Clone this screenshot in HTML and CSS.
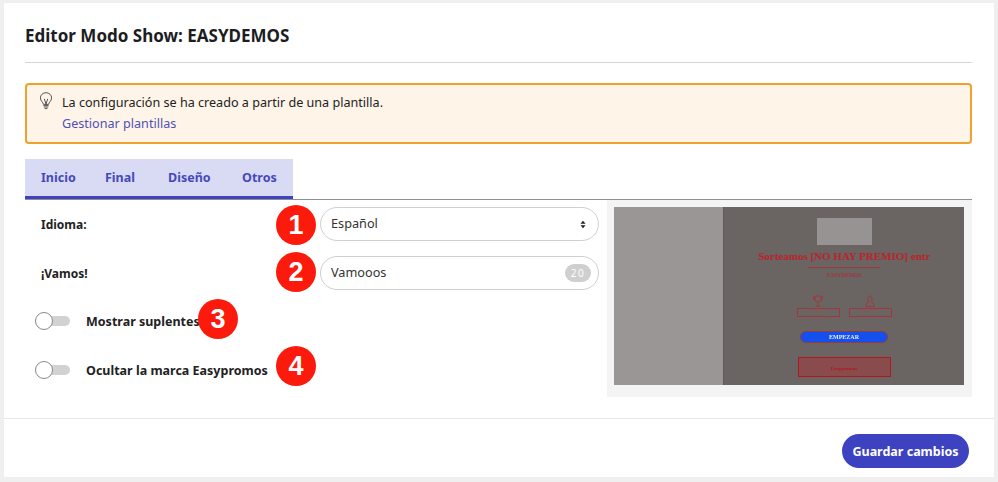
FILE: index.html
```html
<!DOCTYPE html>
<html lang="es">
<head>
<meta charset="utf-8">
<title>Editor Modo Show</title>
<link rel="stylesheet" href="styles.css">
</head>
<body>
<div class="frame">
  <div class="main">
    <h1 class="title">Editor Modo Show: EASYDEMOS</h1>
    <div class="alert">
      <svg class="bulb" width="14" height="18" viewBox="0 0 14 18" fill="none" stroke="#444" stroke-width="0.9" stroke-linecap="round" stroke-linejoin="round">
        <path d="M4.400 12C4.200 10.200 1.400 9 1.400 5.900A5.600 5.200 0 0 1 12.600 5.900C12.600 9 9.800 10.200 9.600 12Z"/>
        <path d="M5.400 7.200 7 12M8.600 7.200 7 12"/>
        <path d="M4.800 13.600H9.200M5.200 15H8.800M6 16.600H8"/>
      </svg>
      <div class="alert-text">
        <p class="alert-line">La configuración se ha creado a partir de una plantilla.</p>
        <a class="alert-link" href="#">Gestionar plantillas</a>
      </div>
    </div>
    <div class="tabs">
      <a class="tab" href="#">Inicio</a>
      <a class="tab" href="#">Final</a>
      <a class="tab" href="#">Diseño</a>
      <a class="tab" href="#">Otros</a>
    </div>
    <div class="content">
      <div class="form">
        <div class="field">
          <span class="field-label">Idioma:</span>
          <div class="control">
            <span class="control-text">Español</span>
            <svg class="arrows" width="6" height="9" viewBox="0 0 7 9" fill="#222"><path d="M3.500 0 6.500 3.500H.5ZM3.500 9 .5 5.500H6.500Z"/></svg>
          </div>
        </div>
        <div class="field">
          <span class="field-label">¡Vamos!</span>
          <div class="control">
            <span class="control-text">Vamooos</span>
            <span class="count">20</span>
          </div>
        </div>
        <div class="switch-row">
          <span class="switch"><span class="knob"></span></span>
          <span class="switch-label">Mostrar suplentes</span>
        </div>
        <div class="switch-row">
          <span class="switch"><span class="knob"></span></span>
          <span class="switch-label">Ocultar la marca Easypromos</span>
        </div>
      </div>
      <div class="preview">
        <div class="shot">
          <div class="shot-side"></div>
          <div class="shot-main">
            <div class="shot-logo"></div>
            <div class="shot-title">Sorteamos [NO HAY PREMIO] entr</div>
            <div class="shot-rule"></div>
            <div class="shot-sub">EASYDEMOS</div>
            <div class="shot-stats">
              <div class="stat">
                <svg class="stat-icon" width="12" height="12" viewBox="0 0 12 12" fill="none" stroke="#a5353a" stroke-width="1"><path d="M3 1H9V4C9 6 7.500 7 6 7S3 6 3 4ZM3 2H1.500C1.500 4 2 5 3.500 5.500M9 2H10.500C10.500 4 10 5 8.500 5.500M6 7V10M3.500 11H8.500"/></svg>
                <div class="stat-box">1 PREMIO</div>
              </div>
              <div class="stat">
                <svg class="stat-icon" width="12" height="12" viewBox="0 0 12 12" fill="none" stroke="#a5353a" stroke-width="1"><path d="M6 1C4.500 1 4 2.200 4 3.500S4.500 7 4.500 7L2 9V11.500H10V9L7.500 7S8 4.800 8 3.500 7.500 1 6 1Z"/></svg>
                <div class="stat-box">SUPLENTES</div>
              </div>
            </div>
            <div class="shot-btn">EMPEZAR</div>
            <div class="shot-brand"><span class="brand-text">Easypromos</span></div>
          </div>
        </div>
      </div>
    </div>
  </div>
  <div class="footer">
    <button class="save" type="button">Guardar cambios</button>
  </div>
  <span class="marker marker-1">1</span>
  <span class="marker marker-2">2</span>
  <span class="marker marker-3">3</span>
  <span class="marker marker-4">4</span>
</div>
</body>
</html>
```
FILE: styles.css
```css
* { box-sizing: border-box; }
html, body { margin: 0; padding: 0; }
body {
  width: 998px;
  height: 482px;
  overflow: hidden;
  background: #fff;
  color: #222;
  font-family: "Noto Sans", "Open Sans", sans-serif;
}
.frame {
  position: relative;
  width: 998px;
  height: 482px;
  border: solid #efefef;
  border-width: 3px 4px 5px 4px;
  display: flex;
  flex-direction: column;
}
.main {
  flex: 1;
  padding: 0 22px 0 21px;
  border-bottom: 1px solid #e8e8e8;
}
.title {
  margin: 0;
  height: 60px;
  padding-top: 21px;
  font-size: 17px;
  line-height: 24px;
  font-weight: 700;
  color: #1d1d1f;
  border-bottom: 1px solid #d4d4d4;
}
.alert {
  display: flex;
  gap: 9px;
  margin-top: 20px;
  height: 61px;
  padding: 7px 12px;
  background: #fff4e8;
  border: 2px solid #f0a02c;
  border-radius: 4px;
}
.bulb { flex: none; margin-top: 0; }
.alert-text { font-size: 12.600px; line-height: 21px; }
.alert-line { margin: 0; color: #222; }
.alert-link { color: #4f50b8; text-decoration: none; }
.tabs {
  display: grid;
  grid-template-columns: 64px 63px 74px 67px;
  width: 268px;
  margin-top: 15px;
  height: 41px;
  background: #d9daf3;
  border-bottom: 4px solid #3d43c0;
}
.tab {
  padding-left: 16px;
  line-height: 37px;
  font-size: 12.500px;
  font-weight: 700;
  color: #4549bb;
  text-decoration: none;
}
.content {
  display: flex;
  border-top: 1px solid #8f8f8f;
  margin-top: -1px;
}
.form { flex: 1; padding: 7px 8px 0 16px; }
.field {
  display: flex;
  align-items: center;
  height: 34px;
  margin-bottom: 15px;
}
.field-label {
  width: 279px;
  font-size: 12px;
  font-weight: 700;
  color: #222;
}
.control {
  display: flex;
  align-items: center;
  justify-content: space-between;
  width: 279px;
  height: 34px;
  padding: 0 7px 0 10px;
  border: 1px solid #cfcfcf;
  border-radius: 17px;
  font-size: 12.700px;
  color: #333;
}
.control-text { margin-bottom: 2px; }
.arrows { margin-right: 5px; }
.count {
  width: 26px;
  height: 18px;
  border-radius: 9px;
  background: #cfcfcf;
  color: #fff;
  font-size: 10px;
  line-height: 18px;
  letter-spacing: 1.500px;
  text-align: center;
}
.switch-row {
  display: flex;
  align-items: center;
  gap: 16px;
  height: 18px;
  margin: 22px 0 31px -6px;
}
.switch-row + .switch-row { margin-top: 0; }
.switch {
  position: relative;
  flex: none;
  width: 35px;
  height: 10px;
  border-radius: 5px;
  background: #d2d2d2;
}
.knob {
  position: absolute;
  left: 0;
  top: -4px;
  width: 18px;
  height: 18px;
  border-radius: 50%;
  background: #fff;
  border: 1px solid #8a8a8a;
}
.switch-label { font-size: 12.500px; font-weight: 700; color: #222; }
.preview {
  flex: none;
  width: 365px;
  height: 197px;
  padding: 7px 8px 0 7px;
  background: #f4f4f4;
}
.shot {
  display: flex;
  width: 350px;
  height: 178px;
  filter: blur(0.35px);
}
.shot-side { flex: none; width: 109px; background: #9a9695; }
.shot-main {
  flex: 1;
  min-width: 0;
  display: flex;
  flex-direction: column;
  align-items: center;
  background: #6a6463;
  border-left: 1px solid #605a59;
  padding-top: 11px;
  font-family: "Liberation Serif", serif;
}
.shot-logo { flex: none; width: 55px; height: 27px; background: #979392; }
.shot-title {
  width: max-content;
  margin-top: 5px;
  height: 13px;
  white-space: nowrap;
  font-size: 11px;
  line-height: 13px;
  font-weight: 700;
  color: #c02025;
}
.shot-rule { flex: none; width: 72px; height: 1px; margin-top: 4px; background: #a5353a; }
.shot-sub { margin-top: 3px; height: 8px; font-size: 5.500px; line-height: 8px; font-weight: 700; color: #a5353a; }
.shot-stats { display: flex; gap: 9px; margin-top: 16px; }
.stat { display: flex; flex-direction: column; align-items: center; }
.stat-box {
  width: 43px;
  height: 9px;
  margin-top: 1px;
  border: 1px solid #a5353a;
  font-size: 3px;
  line-height: 7px;
  text-align: center;
  color: #8d5a5a;
}
.shot-btn {
  flex: none;
  width: 88px;
  height: 12px;
  margin-top: 14px;
  border: 1px solid #8f3a45;
  border-radius: 6px;
  background: #1550ee;
  color: #e8eeff;
  font-size: 6px;
  font-weight: 700;
  line-height: 10px;
  text-align: center;
}
.shot-brand {
  flex: none;
  width: 93px;
  height: 20px;
  margin-top: 14px;
  border: 1px solid #b0181c;
  background: #8a4b4d;
  text-align: center;
  font-size: 5px;
  line-height: 22px;
  font-weight: 700;
  color: #b1181c;
}
.footer {
  flex: none;
  height: 58px;
  display: flex;
  justify-content: flex-end;
  align-items: flex-start;
  padding: 15px 25px 0 0;
}
.save {
  width: 127px;
  height: 34px;
  padding: 0;
  border: 0;
  border-radius: 17px;
  background: #3d43c0;
  color: #fff;
  font-family: inherit;
  font-size: 12.500px;
  font-weight: 700;
}
.marker {
  position: absolute;
  width: 40px;
  height: 40px;
  border-radius: 50%;
  background: #fb1a0c;
  color: #fff;
  font-family: "Liberation Sans", Arial, sans-serif;
  font-size: 27px;
  font-weight: 700;
  line-height: 40px;
  text-align: center;
}
.marker-1 { left: 272px; top: 202px; }
.marker-2 { left: 272px; top: 249px; }
.marker-3 { left: 194px; top: 296px; }
.marker-4 { left: 272px; top: 343px; }
```
